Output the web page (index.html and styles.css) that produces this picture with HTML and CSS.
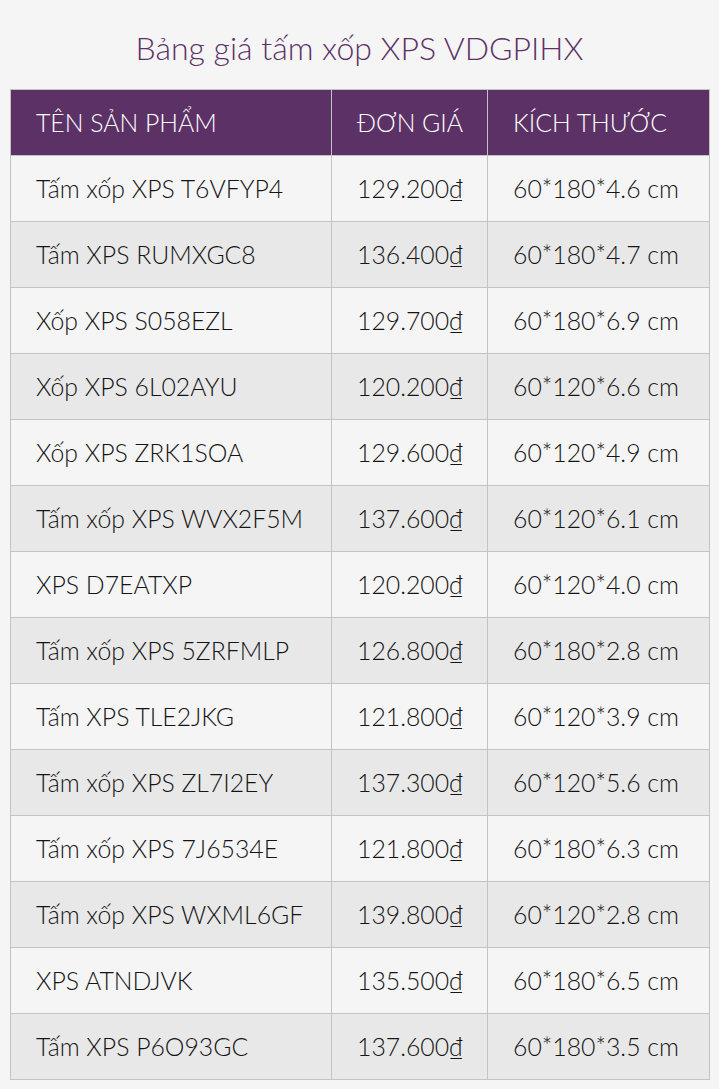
FILE: index.html
```html
<!DOCTYPE html>
<html lang="vi">
<head>
<meta charset="utf-8">
<link rel="stylesheet" href="styles.css">
</head>
<body>
<h1 class="title">Bảng giá tấm xốp XPS VDGPIHX</h1>
<table class="price-table">
  <colgroup><col class="c1"><col class="c2"><col class="c3"></colgroup>
  <thead>
    <tr><th>TÊN SẢN PHẨM</th><th>ĐƠN GIÁ</th><th>KÍCH THƯỚC</th></tr>
  </thead>
  <tbody>
    <tr><td>Tấm xốp XPS T6VFYP4</td><td>129.200₫</td><td>60*180*4.6 cm</td></tr>
    <tr><td>Tấm XPS RUMXGC8</td><td>136.400₫</td><td>60*180*4.7 cm</td></tr>
    <tr><td>Xốp XPS S058EZL</td><td>129.700₫</td><td>60*180*6.9 cm</td></tr>
    <tr><td>Xốp XPS 6L02AYU</td><td>120.200₫</td><td>60*120*6.6 cm</td></tr>
    <tr><td>Xốp XPS ZRK1SOA</td><td>129.600₫</td><td>60*120*4.9 cm</td></tr>
    <tr><td>Tấm xốp XPS WVX2F5M</td><td>137.600₫</td><td>60*120*6.1 cm</td></tr>
    <tr><td>XPS D7EATXP</td><td>120.200₫</td><td>60*120*4.0 cm</td></tr>
    <tr><td>Tấm xốp XPS 5ZRFMLP</td><td>126.800₫</td><td>60*180*2.8 cm</td></tr>
    <tr><td>Tấm XPS TLE2JKG</td><td>121.800₫</td><td>60*120*3.9 cm</td></tr>
    <tr><td>Tấm xốp XPS ZL7I2EY</td><td>137.300₫</td><td>60*120*5.6 cm</td></tr>
    <tr><td>Tấm xốp XPS 7J6534E</td><td>121.800₫</td><td>60*180*6.3 cm</td></tr>
    <tr><td>Tấm xốp XPS WXML6GF</td><td>139.800₫</td><td>60*120*2.8 cm</td></tr>
    <tr><td>XPS ATNDJVK</td><td>135.500₫</td><td>60*180*6.5 cm</td></tr>
    <tr><td>Tấm XPS P6O93GC</td><td>137.600₫</td><td>60*180*3.5 cm</td></tr>
  </tbody>
</table>
</body>
</html>
```
FILE: styles.css
```css
html, body {
  margin: 0;
  padding: 0;
  background: #f5f5f5;
}
body {
  font-family: "Lato", "Liberation Sans", sans-serif;
  color: #141414;
}
.title {
  margin: 0;
  height: 89px;
  box-sizing: border-box;
  padding-top: 28px;
  text-align: center;
  font-weight: 300;
  font-size: 32px;
  line-height: 40px;
  color: #5c3266;
}
.price-table {
  margin: 0 10px;
  width: 699px;
  border-collapse: collapse;
  table-layout: fixed;
}
.c1 { width: 321px; }
.c2 { width: 156px; }
.c3 { width: 222px; }
.price-table th,
.price-table td {
  border: 1px solid #c3c3c3;
  height: 66px;
  padding: 0 0 0 25px;
  text-align: left;
  vertical-align: middle;
  font-size: 24.8px;
  font-weight: 300;
  white-space: nowrap;
  box-sizing: border-box;
}
.price-table th {
  background: #5c3266;
  color: #ffffff;
}
.price-table tbody tr:nth-child(odd) td { background: #f5f5f5; }
.price-table tbody tr:nth-child(even) td { background: #e8e8e8; }
```
